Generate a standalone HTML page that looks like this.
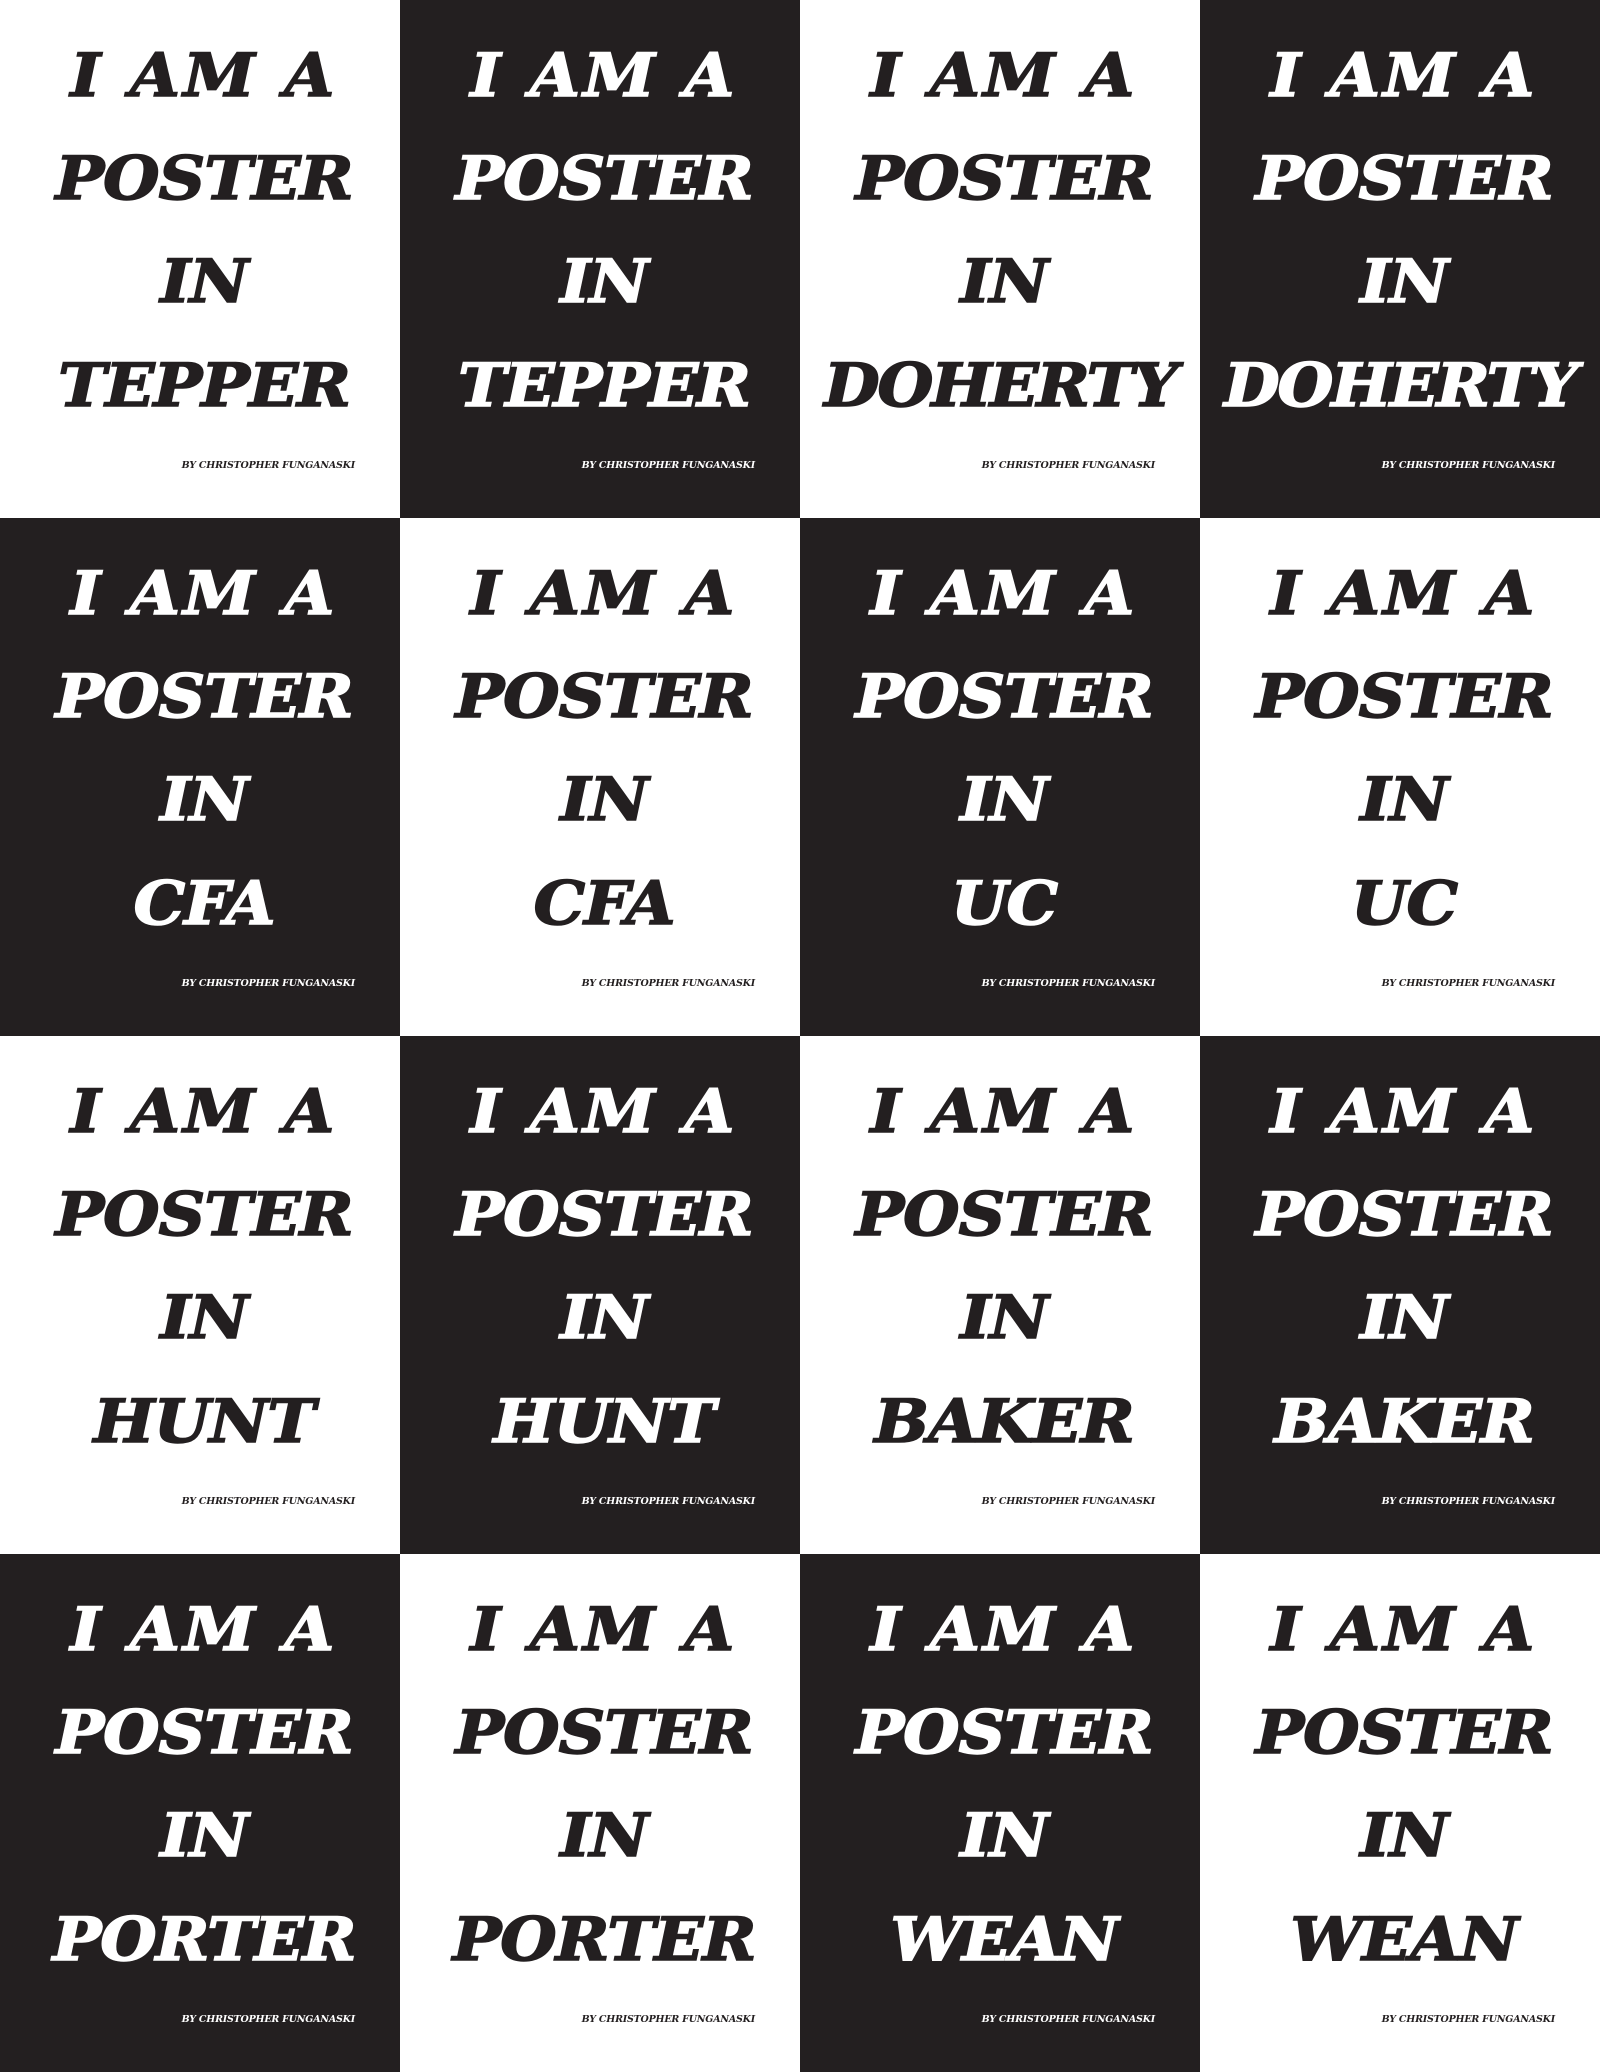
<!DOCTYPE html>
<html><head><meta charset="utf-8"><style>
html,body{margin:0;padding:0;width:1600px;height:2072px;overflow:hidden;background:#fff}
.g{display:grid;grid-template-columns:repeat(4,400px);grid-template-rows:repeat(4,518px)}
.c{position:relative;overflow:hidden}
.b{background:#231f20;color:#fff}.w{background:#fff;color:#231f20}
.b .l{-webkit-text-stroke:1.5px #fff}.w .l{-webkit-text-stroke:1.5px #231f20}
.l{position:absolute;left:4px;width:400px;text-align:center;font-family:"DejaVu Serif","Liberation Serif",serif;font-weight:bold;font-style:italic;font-size:60px;line-height:60px;letter-spacing:-1px;white-space:nowrap;transform:scaleX(1.08)}
.l1{top:46px;letter-spacing:3px}.l2{top:149px}.l3{top:252px}.l4{top:356px}
.by{position:absolute;right:45px;top:460px;font-family:"DejaVu Serif",serif;font-weight:bold;font-style:italic;font-size:9.5px;white-space:nowrap;letter-spacing:-0.2px}
.l4.wide{left:0;transform:scaleX(1.07);letter-spacing:-2px}
</style></head><body><div class="g">
<div class="c w"><div class="l l1">I AM A</div><div class="l l2">POSTER</div><div class="l l3">IN</div><div class="l l4">TEPPER</div><div class="by">BY CHRISTOPHER FUNGANASKI</div></div>
<div class="c b"><div class="l l1">I AM A</div><div class="l l2">POSTER</div><div class="l l3">IN</div><div class="l l4">TEPPER</div><div class="by">BY CHRISTOPHER FUNGANASKI</div></div>
<div class="c w"><div class="l l1">I AM A</div><div class="l l2">POSTER</div><div class="l l3">IN</div><div class="l l4 wide">DOHERTY</div><div class="by">BY CHRISTOPHER FUNGANASKI</div></div>
<div class="c b"><div class="l l1">I AM A</div><div class="l l2">POSTER</div><div class="l l3">IN</div><div class="l l4 wide">DOHERTY</div><div class="by">BY CHRISTOPHER FUNGANASKI</div></div>

<div class="c b"><div class="l l1">I AM A</div><div class="l l2">POSTER</div><div class="l l3">IN</div><div class="l l4">CFA</div><div class="by">BY CHRISTOPHER FUNGANASKI</div></div>
<div class="c w"><div class="l l1">I AM A</div><div class="l l2">POSTER</div><div class="l l3">IN</div><div class="l l4">CFA</div><div class="by">BY CHRISTOPHER FUNGANASKI</div></div>
<div class="c b"><div class="l l1">I AM A</div><div class="l l2">POSTER</div><div class="l l3">IN</div><div class="l l4">UC</div><div class="by">BY CHRISTOPHER FUNGANASKI</div></div>
<div class="c w"><div class="l l1">I AM A</div><div class="l l2">POSTER</div><div class="l l3">IN</div><div class="l l4">UC</div><div class="by">BY CHRISTOPHER FUNGANASKI</div></div>

<div class="c w"><div class="l l1">I AM A</div><div class="l l2">POSTER</div><div class="l l3">IN</div><div class="l l4">HUNT</div><div class="by">BY CHRISTOPHER FUNGANASKI</div></div>
<div class="c b"><div class="l l1">I AM A</div><div class="l l2">POSTER</div><div class="l l3">IN</div><div class="l l4">HUNT</div><div class="by">BY CHRISTOPHER FUNGANASKI</div></div>
<div class="c w"><div class="l l1">I AM A</div><div class="l l2">POSTER</div><div class="l l3">IN</div><div class="l l4">BAKER</div><div class="by">BY CHRISTOPHER FUNGANASKI</div></div>
<div class="c b"><div class="l l1">I AM A</div><div class="l l2">POSTER</div><div class="l l3">IN</div><div class="l l4">BAKER</div><div class="by">BY CHRISTOPHER FUNGANASKI</div></div>

<div class="c b"><div class="l l1">I AM A</div><div class="l l2">POSTER</div><div class="l l3">IN</div><div class="l l4">PORTER</div><div class="by">BY CHRISTOPHER FUNGANASKI</div></div>
<div class="c w"><div class="l l1">I AM A</div><div class="l l2">POSTER</div><div class="l l3">IN</div><div class="l l4">PORTER</div><div class="by">BY CHRISTOPHER FUNGANASKI</div></div>
<div class="c b"><div class="l l1">I AM A</div><div class="l l2">POSTER</div><div class="l l3">IN</div><div class="l l4">WEAN</div><div class="by">BY CHRISTOPHER FUNGANASKI</div></div>
<div class="c w"><div class="l l1">I AM A</div><div class="l l2">POSTER</div><div class="l l3">IN</div><div class="l l4">WEAN</div><div class="by">BY CHRISTOPHER FUNGANASKI</div></div>
</div></body></html>
